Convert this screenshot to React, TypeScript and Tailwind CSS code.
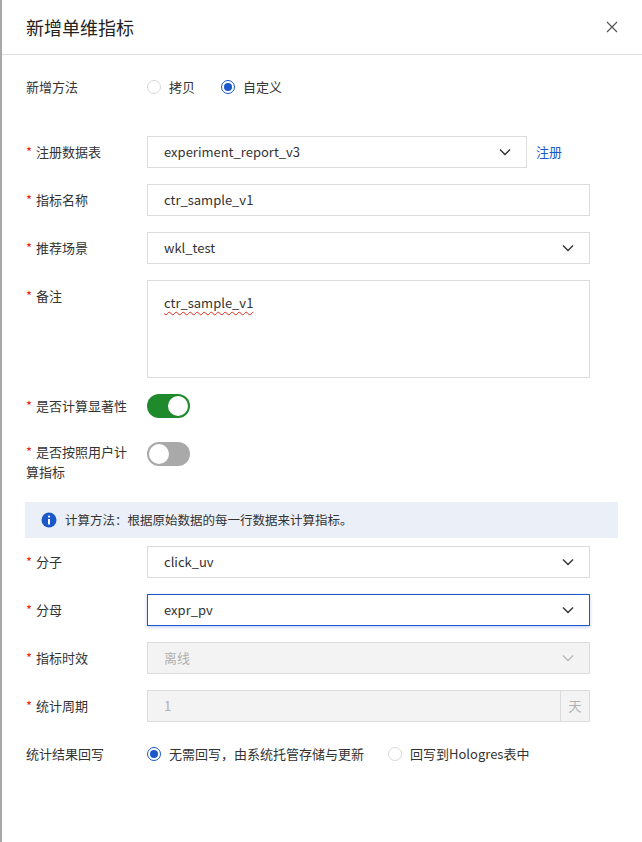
import React from "react";

const F = { fontFamily: '"Noto Sans CJK SC", "Liberation Sans", sans-serif' };

const Chevron = ({ c = "#333" }: { c?: string }) => (
  <svg width="14" height="14" viewBox="0 0 14 14" fill="none"><path d="M2 4.5l5 5 5-5" stroke={c} strokeWidth="1.4" /></svg>
);

const Label = ({ req, children }: { req?: boolean; children: React.ReactNode }) => (
  <div className="w-[121px] shrink-0 text-[13px] text-[#333] leading-[20px]">
    {req && <span className="text-[#e5281b] mr-[4px]">*</span>}
    {children}
  </div>
);

const Select = ({ v, focus, disabled, w = "w-[443px]" }: { v: string; focus?: boolean; disabled?: boolean; w?: string }) => (
  <div className={`${w} h-[32px] flex items-center justify-between pl-[16px] pr-[14px] text-[13px] border ${focus ? "border-[#1b58c9] shadow-[0_1px_3px_rgba(27,88,201,0.3)]" : "border-[#dcdcdc]"} ${disabled ? "bg-[#f3f3f3] text-[#b0b0b0]" : "bg-white text-[#333]"}`}>
    <span>{v}</span>
    <Chevron c={disabled ? "#bbb" : "#333"} />
  </div>
);

const Row = ({ label, req, children, h = "h-[48px]" }: any) => (
  <div className={`flex items-center ${h} pl-[24px]`}>
    <Label req={req}>{label}</Label>
    {children}
  </div>
);

const Radio = ({ on }: { on?: boolean }) => (
  <span className={`inline-flex w-[14px] h-[14px] rounded-full border ${on ? "border-[#1b58c9]" : "border-[#d8d8d8]"} items-center justify-center mr-[8px] bg-white`}>
    {on && <span className="w-[8px] h-[8px] rounded-full bg-[#1b58c9]" />}
  </span>
);

export default function App() {
  return (
    <div style={F} className="w-[642px] h-[842px] bg-white border-l-2 border-[#a8a8a8] overflow-hidden">
      <div className="h-[55px] border-b border-[#e0e0e0] flex items-center justify-between pl-[24px] pr-[24px]">
        <span className="text-[18px] text-[#222]">新增单维指标</span>
        <svg width="12" height="12" viewBox="0 0 12 12"><path d="M1 1l10 10M11 1L1 11" stroke="#555" strokeWidth="1.2" /></svg>
      </div>
      <div className="pt-[10px]">
        <Row label="新增方法" h="h-[44px]">
          <div className="flex items-center text-[13px] text-[#333]">
            <Radio /><span className="mr-[26px]">拷贝</span>
            <Radio on /><span>自定义</span>
          </div>
        </Row>
        <div className="h-[19px]" />
        <Row label="注册数据表" req>
          <Select v="experiment_report_v3" w="w-[380px]" />
          <span className="ml-[9px] text-[13px] text-[#1b58c9]">注册</span>
        </Row>
        <Row label="指标名称" req>
          <div className="w-[443px] h-[32px] border border-[#dcdcdc] flex items-center pl-[16px] text-[13px] text-[#333]">ctr_sample_v1</div>
        </Row>
        <Row label="推荐场景" req>
          <Select v="wkl_test" />
        </Row>
        <div className="flex items-start pl-[24px] pt-[8px] h-[110px]">
          <div className="pt-[6px]"><Label req>备注</Label></div>
          <div className="w-[443px] h-[98px] border border-[#dcdcdc] pl-[16px] pt-[12px] text-[13px] text-[#333]">
            <span className="underline decoration-wavy decoration-[#e5281b] underline-offset-[3px] decoration-[1px]">ctr_sample_v1</span>
          </div>
        </div>
        <Row label="是否计算显著性" req>
          <div className="w-[43px] h-[24px] rounded-full bg-[#1f8a2c] relative">
            <span className="absolute right-[2px] top-[2px] w-[20px] h-[20px] rounded-full bg-white" />
          </div>
        </Row>
        <div className="flex items-start pl-[24px] pt-[12px] h-[70px]">
          <div className="w-[121px] shrink-0 text-[13px] text-[#333] leading-[20px]">
            <span className="text-[#e5281b] mr-[4px]">*</span>是否按照用户计<br />算指标
          </div>
          <div className="w-[43px] h-[24px] rounded-full bg-[#a9a9a9] relative">
            <span className="absolute left-[2px] top-[2px] w-[20px] h-[20px] rounded-full bg-white" />
          </div>
        </div>
        <div className="ml-[23px] mt-[2px] w-[593px] h-[36px] bg-[#ebeff7] flex items-center pl-[16px] text-[12.5px] text-[#333]">
          <svg width="16" height="16" viewBox="0 0 16 16" className="mr-[8px]"><circle cx="8" cy="8" r="7.5" fill="#1b58c9" /><rect x="7" y="7" width="2" height="5.5" fill="#fff" /><circle cx="8" cy="4.6" r="1.1" fill="#fff" /></svg>
          计算方法：根据原始数据的每一行数据来计算指标。
        </div>
        <Row label="分子" req><Select v="click_uv" /></Row>
        <Row label="分母" req><Select v="expr_pv" focus /></Row>
        <Row label="指标时效" req><Select v="离线" disabled /></Row>
        <Row label="统计周期" req>
          <div className="w-[443px] h-[32px] border border-[#dcdcdc] bg-[#f3f3f3] flex text-[13px] text-[#b0b0b0]">
            <span className="flex-1 flex items-center pl-[16px]">1</span>
            <span className="w-[29px] border-l border-[#dcdcdc] flex items-center justify-center">天</span>
          </div>
        </Row>
        <Row label="统计结果回写">
          <div className="flex items-center text-[13px] text-[#333]">
            <Radio on /><span className="mr-[24px]">无需回写，由系统托管存储与更新</span>
            <Radio /><span>回写到Hologres表中</span>
          </div>
        </Row>
      </div>
    </div>
  );
}
